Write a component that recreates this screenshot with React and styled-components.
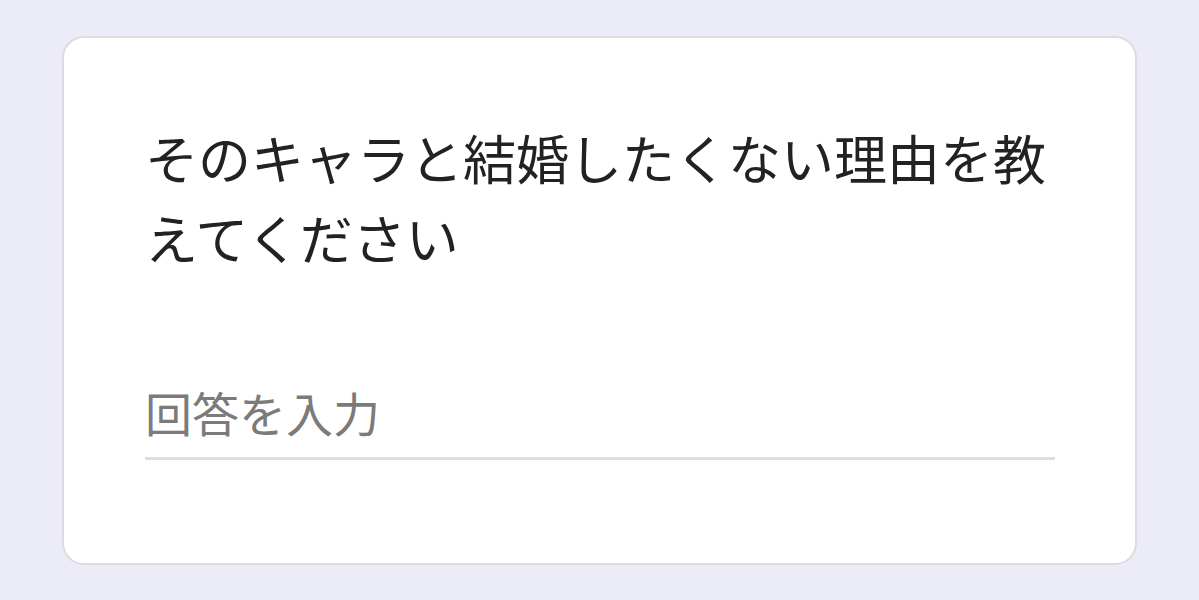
import React from 'react';
import styled, { createGlobalStyle } from 'styled-components';

const GlobalStyle = createGlobalStyle`
  html, body {
    margin: 0;
    padding: 0;
    background: #ecebf8;
  }
  body {
    font-family: "Noto Sans CJK JP", "Noto Sans", sans-serif;
  }
`;

const Page = styled.div`
  min-height: 600px;
  box-sizing: border-box;
  padding: 36px 62px 0 62px;
`;

const Card = styled.div`
  box-sizing: border-box;
  width: 1075px;
  height: 529px;
  background: #ffffff;
  border: 2px solid #dcdcdf;
  border-radius: 22px;
  padding: 79px 80px 0 81px;
`;

const Question = styled.h2`
  margin: 0;
  font-size: 53px;
  line-height: 80px;
  font-weight: 400;
  color: #222222;
`;

const AnswerInput = styled.input`
  display: block;
  box-sizing: border-box;
  width: 100%;
  margin-top: 104px;
  padding: 0 0 16px 0;
  border: none;
  border-bottom: 3px solid #dedede;
  outline: none;
  background: transparent;
  font-family: "Noto Sans CJK JP", "Noto Sans", sans-serif;
  font-size: 47px;
  line-height: 60px;
  height: 79px;
  color: #222222;

  &::placeholder {
    color: #7b7b7b;
  }
`;

const App = () => {
  return (
    <>
      <GlobalStyle />
      <Page>
        <Card>
          <Question>そのキャラと結婚したくない理由を教えてください</Question>
          <AnswerInput placeholder="回答を入力" />
        </Card>
      </Page>
    </>
  );
};

export default App;
